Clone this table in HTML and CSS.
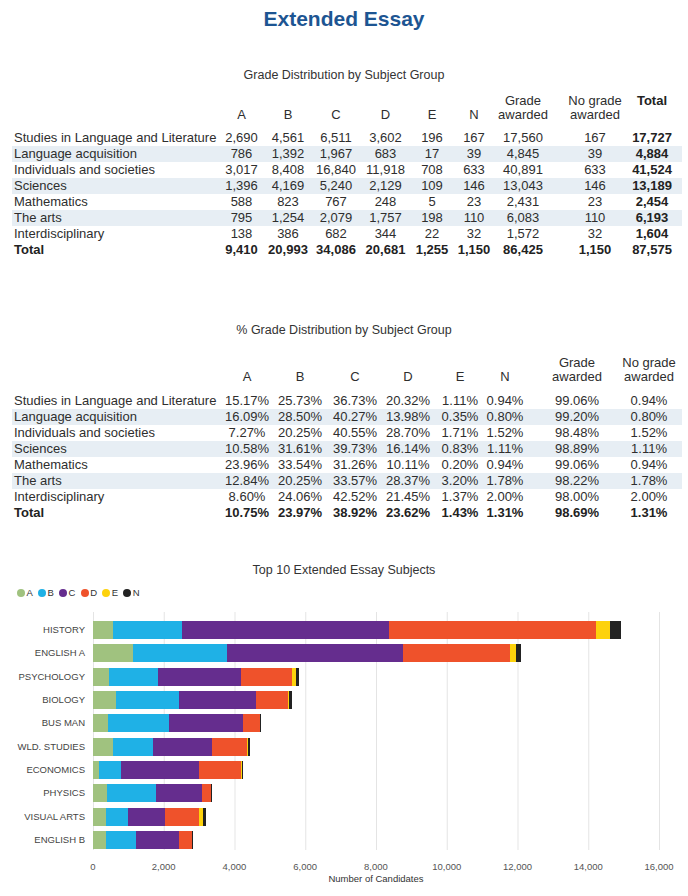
FILE: index.html
```html
<!DOCTYPE html>
<html lang="en">
<head>
<meta charset="utf-8">
<title>Extended Essay</title>
<link rel="stylesheet" href="styles.css">
</head>
<body>
<main class="page">
  <h1 class="page-title">Extended Essay</h1>

  <section class="grade-table counts">
    <h2 class="section-title">Grade Distribution by Subject Group</h2>
    <div class="row head">
      <span class="label"></span><span>A</span><span>B</span><span>C</span><span>D</span><span>E</span><span>N</span><span>Grade<br>awarded</span><span>No grade<br>awarded</span><span class="top b">Total</span>
    </div>
    <div class="row"><span class="label">Studies in Language and Literature</span><span>2,690</span><span>4,561</span><span>6,511</span><span>3,602</span><span>196</span><span>167</span><span>17,560</span><span>167</span><span class="b">17,727</span></div>
    <div class="row alt"><span class="label">Language acquisition</span><span>786</span><span>1,392</span><span>1,967</span><span>683</span><span>17</span><span>39</span><span>4,845</span><span>39</span><span class="b">4,884</span></div>
    <div class="row"><span class="label">Individuals and societies</span><span>3,017</span><span>8,408</span><span>16,840</span><span>11,918</span><span>708</span><span>633</span><span>40,891</span><span>633</span><span class="b">41,524</span></div>
    <div class="row alt"><span class="label">Sciences</span><span>1,396</span><span>4,169</span><span>5,240</span><span>2,129</span><span>109</span><span>146</span><span>13,043</span><span>146</span><span class="b">13,189</span></div>
    <div class="row"><span class="label">Mathematics</span><span>588</span><span>823</span><span>767</span><span>248</span><span>5</span><span>23</span><span>2,431</span><span>23</span><span class="b">2,454</span></div>
    <div class="row alt"><span class="label">The arts</span><span>795</span><span>1,254</span><span>2,079</span><span>1,757</span><span>198</span><span>110</span><span>6,083</span><span>110</span><span class="b">6,193</span></div>
    <div class="row"><span class="label">Interdisciplinary</span><span>138</span><span>386</span><span>682</span><span>344</span><span>22</span><span>32</span><span>1,572</span><span>32</span><span class="b">1,604</span></div>
    <div class="row total"><span class="label">Total</span><span>9,410</span><span>20,993</span><span>34,086</span><span>20,681</span><span>1,255</span><span>1,150</span><span>86,425</span><span>1,150</span><span>87,575</span></div>
  </section>

  <section class="grade-table pct">
    <h2 class="section-title">% Grade Distribution by Subject Group</h2>
    <div class="row head">
      <span class="label"></span><span>A</span><span>B</span><span>C</span><span>D</span><span>E</span><span>N</span><span>Grade<br>awarded</span><span>No grade<br>awarded</span>
    </div>
    <div class="row"><span class="label">Studies in Language and Literature</span><span>15.17%</span><span>25.73%</span><span>36.73%</span><span>20.32%</span><span>1.11%</span><span>0.94%</span><span>99.06%</span><span>0.94%</span></div>
    <div class="row alt"><span class="label">Language acquisition</span><span>16.09%</span><span>28.50%</span><span>40.27%</span><span>13.98%</span><span>0.35%</span><span>0.80%</span><span>99.20%</span><span>0.80%</span></div>
    <div class="row"><span class="label">Individuals and societies</span><span>7.27%</span><span>20.25%</span><span>40.55%</span><span>28.70%</span><span>1.71%</span><span>1.52%</span><span>98.48%</span><span>1.52%</span></div>
    <div class="row alt"><span class="label">Sciences</span><span>10.58%</span><span>31.61%</span><span>39.73%</span><span>16.14%</span><span>0.83%</span><span>1.11%</span><span>98.89%</span><span>1.11%</span></div>
    <div class="row"><span class="label">Mathematics</span><span>23.96%</span><span>33.54%</span><span>31.26%</span><span>10.11%</span><span>0.20%</span><span>0.94%</span><span>99.06%</span><span>0.94%</span></div>
    <div class="row alt"><span class="label">The arts</span><span>12.84%</span><span>20.25%</span><span>33.57%</span><span>28.37%</span><span>3.20%</span><span>1.78%</span><span>98.22%</span><span>1.78%</span></div>
    <div class="row"><span class="label">Interdisciplinary</span><span>8.60%</span><span>24.06%</span><span>42.52%</span><span>21.45%</span><span>1.37%</span><span>2.00%</span><span>98.00%</span><span>2.00%</span></div>
    <div class="row total"><span class="label">Total</span><span>10.75%</span><span>23.97%</span><span>38.92%</span><span>23.62%</span><span>1.43%</span><span>1.31%</span><span>98.69%</span><span>1.31%</span></div>
  </section>

  <section class="chart">
    <h2 class="section-title">Top 10 Extended Essay Subjects</h2>
    <ul class="legend">
      <li><i class="dot g-a"></i>A</li>
      <li><i class="dot g-b"></i>B</li>
      <li><i class="dot g-c"></i>C</li>
      <li><i class="dot g-d"></i>D</li>
      <li><i class="dot g-e"></i>E</li>
      <li><i class="dot g-n"></i>N</li>
    </ul>
    <div class="chart-body">
      <div class="cats">
        <span>HISTORY</span><span>ENGLISH A</span><span>PSYCHOLOGY</span><span>BIOLOGY</span><span>BUS MAN</span>
        <span>WLD. STUDIES</span><span>ECONOMICS</span><span>PHYSICS</span><span>VISUAL ARTS</span><span>ENGLISH B</span>
      </div>
      <div class="plot">
        <div class="bar"><i class="seg g-a" style="width:19.7px"></i><i class="seg g-b" style="width:69.6px"></i><i class="seg g-c" style="width:206.4px"></i><i class="seg g-d" style="width:207px"></i><i class="seg g-e" style="width:14.3px"></i><i class="seg g-n" style="width:11px"></i></div>
        <div class="bar"><i class="seg g-a" style="width:39.7px"></i><i class="seg g-b" style="width:94.3px"></i><i class="seg g-c" style="width:176.3px"></i><i class="seg g-d" style="width:107px"></i><i class="seg g-e" style="width:5.7px"></i><i class="seg g-n" style="width:4.7px"></i></div>
        <div class="bar"><i class="seg g-a" style="width:16.3px"></i><i class="seg g-b" style="width:48.4px"></i><i class="seg g-c" style="width:83px"></i><i class="seg g-d" style="width:51.6px"></i><i class="seg g-e" style="width:3.4px"></i><i class="seg g-n" style="width:3.6px"></i></div>
        <div class="bar"><i class="seg g-a" style="width:23px"></i><i class="seg g-b" style="width:63px"></i><i class="seg g-c" style="width:77px"></i><i class="seg g-d" style="width:32.3px"></i><i class="seg g-e" style="width:0.7px"></i><i class="seg g-n" style="width:2.7px"></i></div>
        <div class="bar"><i class="seg g-a" style="width:15.3px"></i><i class="seg g-b" style="width:61px"></i><i class="seg g-c" style="width:73.4px"></i><i class="seg g-d" style="width:17.3px"></i><i class="seg g-e" style="width:0.3px"></i><i class="seg g-n" style="width:0.7px"></i></div>
        <div class="bar"><i class="seg g-a" style="width:20.3px"></i><i class="seg g-b" style="width:40px"></i><i class="seg g-c" style="width:58.7px"></i><i class="seg g-d" style="width:35.3px"></i><i class="seg g-e" style="width:0.7px"></i><i class="seg g-n" style="width:2px"></i></div>
        <div class="bar"><i class="seg g-a" style="width:6.3px"></i><i class="seg g-b" style="width:21.4px"></i><i class="seg g-c" style="width:78.6px"></i><i class="seg g-d" style="width:41.7px"></i><i class="seg g-e" style="width:0.7px"></i><i class="seg g-n" style="width:1.6px"></i></div>
        <div class="bar"><i class="seg g-a" style="width:14.3px"></i><i class="seg g-b" style="width:48.7px"></i><i class="seg g-c" style="width:45.7px"></i><i class="seg g-d" style="width:9.3px"></i><i class="seg g-e" style="width:0.3px"></i><i class="seg g-n" style="width:0.7px"></i></div>
        <div class="bar"><i class="seg g-a" style="width:13px"></i><i class="seg g-b" style="width:22.3px"></i><i class="seg g-c" style="width:36.7px"></i><i class="seg g-d" style="width:34.3px"></i><i class="seg g-e" style="width:4px"></i><i class="seg g-n" style="width:2.4px"></i></div>
        <div class="bar"><i class="seg g-a" style="width:13px"></i><i class="seg g-b" style="width:30px"></i><i class="seg g-c" style="width:43.3px"></i><i class="seg g-d" style="width:12.4px"></i><i class="seg g-e" style="width:0.3px"></i><i class="seg g-n" style="width:0.7px"></i></div>
      </div>
    </div>
    <div class="ticks"><span>0</span><span>2,000</span><span>4,000</span><span>6,000</span><span>8,000</span><span>10,000</span><span>12,000</span><span>14,000</span><span>16,000</span></div>
    <div class="axis-title">Number of Candidates</div>
  </section>
</main>
</body>
</html>
```

FILE: styles.css
```css
* {
  box-sizing: border-box;
  margin: 0;
  padding: 0;
}

body {
  font-family: "Liberation Sans", Arial, sans-serif;
  color: #333;
  background: #fff;
}

.page {
  width: 688px;
}

.page-title {
  font-size: 21px;
  line-height: 24px;
  font-weight: bold;
  color: #1d5592;
  text-align: center;
  padding-top: 7px;
}

.section-title {
  font-size: 12.5px;
  line-height: 16px;
  font-weight: normal;
  text-align: center;
  color: #333;
}

/* ---------- tables ---------- */
.grade-table {
  margin-left: 12px;
  margin-right: 6px;
}

.grade-table .section-title {
  margin-left: -12px;
  margin-right: -6px;
}

.row {
  display: grid;
  font-size: 13px;
  line-height: 16px;
  height: 16px;
  color: #2e2e2e;
}

.row > span {
  justify-self: center;
  white-space: nowrap;
}

.row > .label {
  justify-self: start;
  padding-left: 2px;
}

.row.alt {
  background: #e7eef4;
}

.row.total,
.row .b {
  font-weight: bold;
  color: #222;
}

.row.head {
  height: auto;
  line-height: 14px;
  align-items: end;
  text-align: center;
}

.row.head .top {
  align-self: start;
}

.counts {
  margin-top: 36px;
}

.counts .row {
  grid-template-columns: 206px 47px 46px 50px 49px 44px 40px 58px 86px 28px;
}

.counts .head {
  margin-top: 11px;
  margin-bottom: 8px;
}

.pct {
  margin-top: 64px;
}

.pct .row {
  grid-template-columns: 209px 52px 54px 56px 50px 54px 36px 108px 36px;
}

.pct .head {
  margin-top: 18px;
  margin-bottom: 9px;
}

/* ---------- chart ---------- */
.chart {
  margin-top: 41px;
}

.legend {
  list-style: none;
  display: flex;
  gap: 5.2px;
  margin-top: 9px;
  padding-left: 17px;
  font-size: 9.5px;
  line-height: 12px;
  color: #333;
}

.legend li {
  display: flex;
  align-items: center;
}

.dot {
  display: inline-block;
  width: 8px;
  height: 8px;
  border-radius: 50%;
  margin-right: 1.5px;
}

.chart-body {
  display: flex;
  margin-top: 13px;
}

.cats {
  width: 85px;
  margin-right: 8px;
  padding-top: 9px;
  display: flex;
  flex-direction: column;
  gap: 5.333px;
  text-align: right;
  font-size: 9.5px;
  line-height: 18px;
  color: #444;
}

.plot {
  width: 567px;
  height: 238px;
  padding-top: 9px;
  display: flex;
  flex-direction: column;
  gap: 5.333px;
  background-image: linear-gradient(to right, #e4e4e4 1px, transparent 1px);
  background-size: 70.75px 100%;
  background-repeat: repeat-x;
}

.bar {
  display: flex;
  height: 18px;
}

.seg {
  display: block;
  height: 100%;
  flex: none;
}

.g-a { background: #a0c27f; }
.g-b { background: #1fb1e6; }
.g-c { background: #652d8e; }
.g-d { background: #ef522b; }
.g-e { background: #fdd20c; }
.g-n { background: #222; }

.ticks {
  display: flex;
  margin-top: 11px;
  margin-left: 57.6px;
  font-size: 9.5px;
  line-height: 12px;
  color: #555;
}

.ticks span {
  width: 70.75px;
  flex: none;
  text-align: center;
}

.axis-title {
  margin-left: 93px;
  width: 566px;
  text-align: center;
  font-size: 9.5px;
  line-height: 12px;
  color: #333;
}
```
